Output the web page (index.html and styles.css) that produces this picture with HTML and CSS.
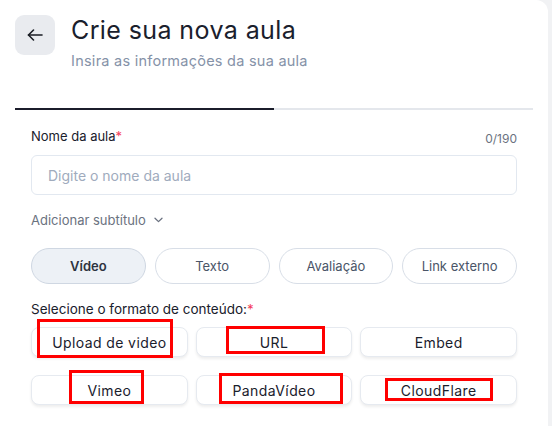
FILE: index.html
```html
<!DOCTYPE html>
<html lang="pt-BR">
<head>
  <meta charset="UTF-8">
  <meta name="viewport" content="width=device-width, initial-scale=1.0">
  <title>Crie sua nova aula</title>
  <link rel="stylesheet" href="styles.css">
</head>
<body>
  <div class="panel">
    <header class="page-header">
      <button class="back-btn" type="button" aria-label="Voltar">
        <svg width="16" height="12" viewBox="0 0 16 12" fill="none" stroke="#1a1d24" stroke-width="1.6" stroke-linecap="round" stroke-linejoin="round">
          <path d="M15 6H1.5"/>
          <path d="M6.5 1L1.5 6l5 5"/>
        </svg>
      </button>
      <div class="header-text">
        <h1>Crie sua nova aula</h1>
        <p class="subtitle">Insira as informações da sua aula</p>
      </div>
    </header>

    <div class="steps">
      <div class="step active"></div>
      <div class="step"></div>
    </div>

    <form class="lesson-form">
      <div class="label-row">
        <label for="lesson-name">Nome da aula<span class="req">*</span></label>
        <span class="counter">0/190</span>
      </div>
      <input type="text" id="lesson-name" placeholder="Digite o nome da aula">

      <button type="button" class="subtitle-toggle">
        Adicionar subtítulo
        <svg width="9" height="6" viewBox="0 0 9 6" fill="none" stroke="#6b7280" stroke-width="1.3" stroke-linecap="round" stroke-linejoin="round">
          <path d="M1 1.2l3.5 3.4L8 1.2"/>
        </svg>
      </button>

      <div class="type-pills">
        <button type="button" class="pill selected">Vídeo</button>
        <button type="button" class="pill">Texto</button>
        <button type="button" class="pill">Avaliação</button>
        <button type="button" class="pill">Link externo</button>
      </div>

      <p class="format-title">Selecione o formato de conteúdo:<span class="req">*</span></p>

      <div class="format-grid">
        <button type="button" class="format-btn">Upload de video</button>
        <button type="button" class="format-btn">URL</button>
        <button type="button" class="format-btn">Embed</button>
        <button type="button" class="format-btn">Vimeo</button>
        <button type="button" class="format-btn">PandaVídeo</button>
        <button type="button" class="format-btn">CloudFlare</button>

        <span class="mark mark-upload"></span>
        <span class="mark mark-url"></span>
        <span class="mark mark-vimeo"></span>
        <span class="mark mark-panda"></span>
        <span class="mark mark-cloud"></span>
      </div>
    </form>
  </div>
</body>
</html>
```

FILE: styles.css
```css
:root {
  --ink: #1a202c;
  --muted: #8592a8;
  --gray-text: #6b7280;
  --line: #e4e7ec;
  --field: #e2e8f0;
  --req: #f43f5e;
}

* {
  margin: 0;
  padding: 0;
  box-sizing: border-box;
}

body {
  font-family: Inter, "Open Sans", sans-serif;
  background-color: #f1f2f4;
  color: var(--ink);
  overflow: hidden;
}

.panel {
  width: 548px;
  height: 426px;
  background: white;
  border-top-right-radius: 12px;
  padding: 15px 15px 0 15px;
}

.page-header {
  display: flex;
  gap: 16px;
}

.back-btn {
  width: 40px;
  height: 40px;
  border: none;
  border-radius: 9px;
  background: #e9ebef;
  display: flex;
  align-items: center;
  justify-content: center;
  flex-shrink: 0;
}

h1 {
  font-size: 25px;
  font-weight: 400;
  line-height: 30px;
  letter-spacing: 0.4px;
  color: var(--ink);
}

.subtitle {
  font-size: 14.5px;
  line-height: 18px;
  letter-spacing: 0.25px;
  color: var(--muted);
  margin-top: 7px;
}

.steps {
  display: flex;
  margin-top: 38px;
}

.step {
  flex: 1;
  height: 2px;
  background: var(--line);
}

.step.active {
  background: #1b1d2b;
}

.lesson-form {
  padding: 0 16px;
}

.label-row {
  display: flex;
  justify-content: space-between;
  align-items: flex-end;
  margin-top: 17px;
  height: 19px;
}

label {
  font-size: 13px;
  line-height: 19px;
  color: var(--ink);
  align-self: flex-start;
}

.req {
  color: var(--req);
}

.counter {
  font-size: 12px;
  color: var(--gray-text);
  line-height: 14px;
}

input {
  width: 100%;
  height: 40px;
  margin-top: 9px;
  padding: 0 16px;
  border: 1px solid var(--field);
  border-radius: 6px;
  font-family: inherit;
  font-size: 14px;
}

input::placeholder {
  color: #a0abbd;
}

.subtitle-toggle {
  display: flex;
  align-items: center;
  gap: 8px;
  margin-top: 17px;
  border: none;
  background: none;
  font-family: inherit;
  font-size: 13px;
  color: var(--gray-text);
}

.type-pills {
  display: grid;
  grid-template-columns: repeat(4, 1fr);
  gap: 9px;
  margin-top: 20px;
}

.pill {
  height: 36px;
  border: 1px solid #d8dee7;
  border-radius: 18px;
  background: white;
  font-family: inherit;
  font-size: 13px;
  color: #4a5568;
}

.pill.selected {
  background: #edf1f6;
  border-color: #cfd7e2;
  font-weight: 600;
  color: #2d3340;
}

.format-title {
  font-size: 13.5px;
  line-height: 17px;
  margin-top: 17px;
}

.format-grid {
  position: relative;
  display: grid;
  grid-template-columns: repeat(3, 1fr);
  gap: 18px 8px;
  margin-top: 9px;
}

.format-btn {
  height: 30px;
  border: 1px solid #e6eaf0;
  border-radius: 8px;
  background: white;
  box-shadow: 0 2px 3px rgba(0, 0, 0, 0.07);
  font-family: inherit;
  font-size: 14px;
  letter-spacing: 0.4px;
  color: var(--ink);
}

/* red highlight boxes over the options */
.mark {
  position: absolute;
  border: 3px solid #ff0000;
}

.mark-upload { left: 6px; top: -8px; width: 136px; height: 39px; }
.mark-url { left: 195px; top: -1px; width: 99px; height: 28px; }
.mark-vimeo { left: 38px; top: 43px; width: 75px; height: 34px; }
.mark-panda { left: 188px; top: 46px; width: 124px; height: 31px; }
.mark-cloud { left: 354px; top: 51px; width: 108px; height: 23px; }
```
